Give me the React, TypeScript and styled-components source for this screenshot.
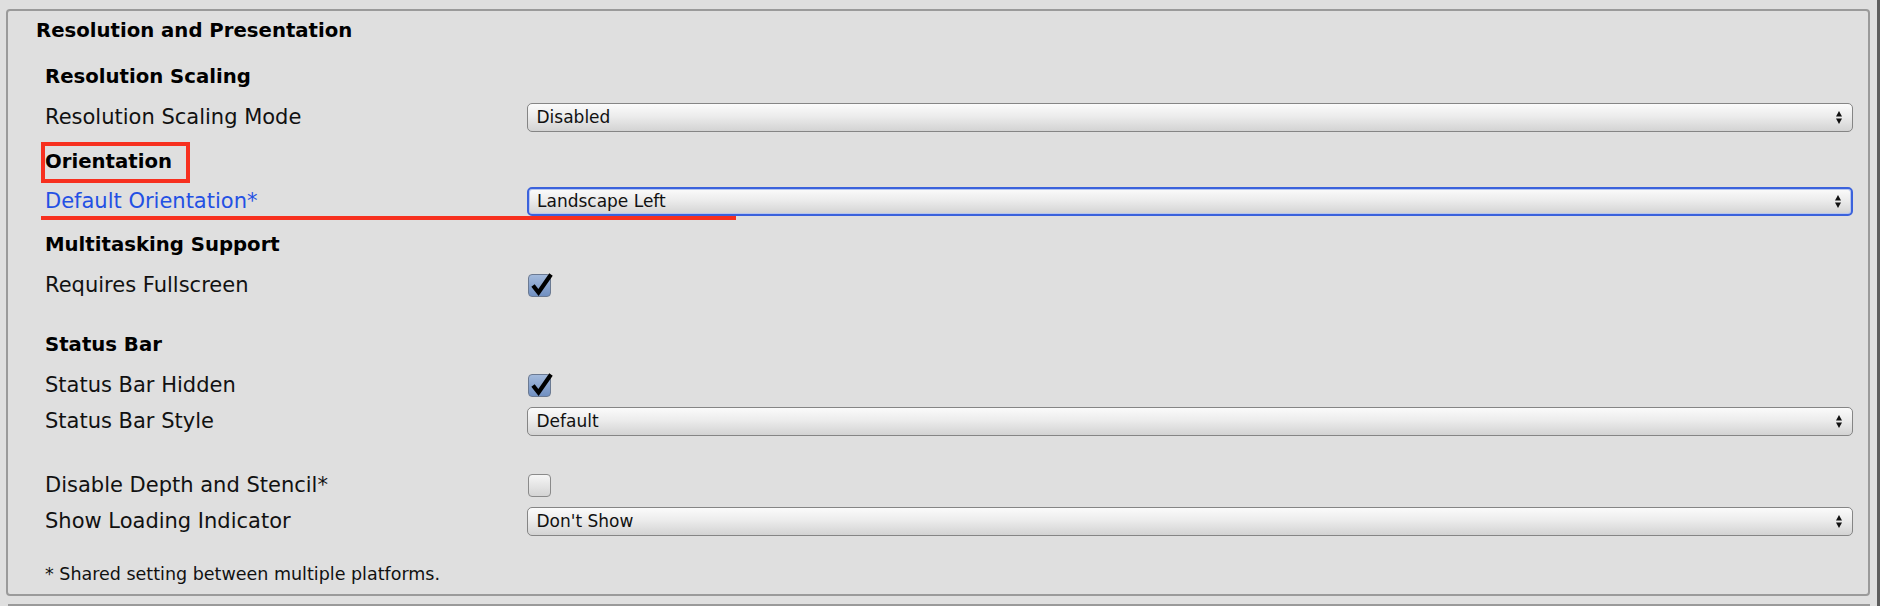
import React from 'react';
import styled, { createGlobalStyle } from 'styled-components';

const GlobalStyle = createGlobalStyle`
  html, body {
    margin: 0;
    padding: 0;
    background: #dfdfdf;
    overflow: hidden;
  }
  body {
    font-family: 'DejaVu Sans', 'Lucida Grande', sans-serif;
    color: #111;
  }
`;

const Page = styled.div`
  display: flex;
  width: 1880px;
  height: 606px;
  background: #dfdfdf;
`;

const Main = styled.div`
  flex: 1;
  padding: 9px 7px 0 6px;
  box-sizing: border-box;
`;

const Edge = styled.div`
  width: 3px;
  background: #5e5e5e;
`;

const Panel = styled.section`
  border: 2px solid #9a9a9a;
  border-radius: 4px;
  padding: 2px 0 2px;
  display: flex;
  flex-direction: column;
`;

const NextPanel = styled.div`
  margin-top: 8px;
  border-top: 2px solid #9a9a9a;
  margin-left: 2px;
`;

const Title = styled.h2`
  margin: 0;
  height: 36px;
  line-height: 36px;
  padding-left: 28px;
  font-size: 19.7px;
  font-weight: bold;
  color: #000;
`;

const GroupHeader = styled.h3<{ $top: number }>`
  margin: ${(p) => p.$top}px 0 0;
  height: 36px;
  line-height: 36px;
  padding-left: 37px;
  font-size: 19.7px;
  font-weight: bold;
  color: #000;
`;

const Highlight = styled.span`
  position: relative;
  display: inline-block;

  &::after {
    content: '';
    position: absolute;
    left: -4px;
    right: -18px;
    top: calc(50% - 20.5px);
    height: 41px;
    border: 4px solid #f7301f;
    box-sizing: border-box;
  }
`;

const FieldRow = styled.div<{ $top: number; $underlined?: boolean }>`
  position: relative;
  margin-top: ${(p) => p.$top}px;
  height: 36px;
  display: grid;
  grid-template-columns: 482px 1fr;
  align-items: center;
  padding: 0 15px 0 37px;

  ${(p) =>
    p.$underlined &&
    `
    &::after {
      content: '';
      position: absolute;
      left: 33px;
      width: 695px;
      top: 33px;
      height: 4px;
      background: #f7301f;
    }
  `}
`;

const Label = styled.span<{ $modified?: boolean }>`
  font-size: 21px;
  color: ${(p) => (p.$modified ? '#2350e4' : '#111')};
  white-space: nowrap;
`;

const Select = styled.div<{ $focused?: boolean }>`
  height: 29px;
  box-sizing: border-box;
  display: flex;
  align-items: center;
  justify-content: space-between;
  padding: 0 10px 0 ${(p) => (p.$focused ? '8px' : '8.5px')};
  border: ${(p) => (p.$focused ? '2px solid #3b62dc' : '1.5px solid #858585')};
  border-radius: 5px;
  background: linear-gradient(#fbfbfb, #ececec 45%, #d3d3d3);
  box-shadow: ${(p) => (p.$focused ? 'inset 0 0 0 1px #b7c6ee' : 'none')};
  font-size: 17px;
  color: #111;
`;

const Checkbox = styled.div<{ $checked?: boolean }>`
  position: relative;
  width: 23px;
  height: 23px;
  margin-left: 1px;
  box-sizing: border-box;
  border-radius: 4px;
  border: 1.5px solid ${(p) => (p.$checked ? '#6b7a92' : '#8a8a8a')};
  background: ${(p) =>
    p.$checked
      ? 'linear-gradient(#a3badc, #7190c1)'
      : 'linear-gradient(#f6f6f6, #d4d4d4)'};

  svg {
    position: absolute;
    left: -1.5px;
    top: -1.5px;
    overflow: visible;
  }
`;

const Footnote = styled.p`
  margin: 17px 0 0;
  height: 36px;
  line-height: 36px;
  padding-left: 37px;
  font-size: 17.5px;
  color: #111;
`;

const Arrows = () => (
  <svg width="6" height="13" viewBox="0 0 6 13">
    <polygon points="0,5.5 3,0 6,5.5" fill="#111" />
    <polygon points="0,7.5 6,7.5 3,13" fill="#111" />
  </svg>
);

const Check = () => (
  <svg width="26" height="24" viewBox="0 0 26 24">
    <polyline
      points="5,12.5 10.5,19.5 23,1.5"
      fill="none"
      stroke="#000"
      strokeWidth="4.2"
      strokeLinejoin="miter"
    />
  </svg>
);

const Dropdown: React.FC<{ value: string; focused?: boolean }> = ({ value, focused }) => (
  <Select $focused={focused}>
    <span>{value}</span>
    <Arrows />
  </Select>
);

export default function App() {
  return (
    <Page>
      <GlobalStyle />
      <Main>
        <Panel>
          <Title>Resolution and Presentation</Title>

          <GroupHeader $top={10}>Resolution Scaling</GroupHeader>
          <FieldRow $top={4}>
            <Label>Resolution Scaling Mode</Label>
            <Dropdown value="Disabled" />
          </FieldRow>

          <GroupHeader $top={9}>
            <Highlight>Orientation</Highlight>
          </GroupHeader>
          <FieldRow $top={3} $underlined>
            <Label $modified>Default Orientation*</Label>
            <Dropdown value="Landscape Left" focused />
          </FieldRow>

          <GroupHeader $top={8}>Multitasking Support</GroupHeader>
          <FieldRow $top={4}>
            <Label>Requires Fullscreen</Label>
            <Checkbox $checked>
              <Check />
            </Checkbox>
          </FieldRow>

          <GroupHeader $top={24}>Status Bar</GroupHeader>
          <FieldRow $top={4}>
            <Label>Status Bar Hidden</Label>
            <Checkbox $checked>
              <Check />
            </Checkbox>
          </FieldRow>
          <FieldRow $top={0}>
            <Label>Status Bar Style</Label>
            <Dropdown value="Default" />
          </FieldRow>

          <FieldRow $top={28}>
            <Label>Disable Depth and Stencil*</Label>
            <Checkbox />
          </FieldRow>
          <FieldRow $top={0}>
            <Label>Show Loading Indicator</Label>
            <Dropdown value="Don't Show" />
          </FieldRow>

          <Footnote>* Shared setting between multiple platforms.</Footnote>
        </Panel>
        <NextPanel />
      </Main>
      <Edge />
    </Page>
  );
}
